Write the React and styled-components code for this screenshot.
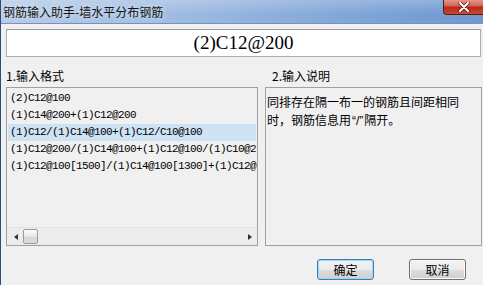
import React from 'react';
import styled, { createGlobalStyle } from 'styled-components';

const GlobalStyle = createGlobalStyle`
  html, body {
    margin: 0;
    padding: 0;
    background: #f0f0f0;
  }
  body {
    font-family: 'Noto Sans CJK SC', 'Liberation Sans', sans-serif;
    font-size: 12px;
    color: #000;
  }
`;

const cjk = `'Noto Sans CJK SC', 'Liberation Sans', sans-serif`;

const Window = styled.div`
  width: 483px;
  height: 285px;
  box-sizing: border-box;
  border-left: 1px solid #2c4d78;
  display: flex;
  flex-direction: column;
  background: #f0f0f0;
  overflow: hidden;
`;

const TitleBar = styled.div`
  height: 24px;
  flex: none;
  box-sizing: border-box;
  display: flex;
  justify-content: space-between;
  align-items: flex-start;
  border-bottom: 1px solid #7592bb;
  background:
    linear-gradient(to bottom, rgba(255, 255, 255, 0.22), rgba(255, 255, 255, 0) 60%),
    linear-gradient(to right, #b6cbe7 0%, #a0bce2 35%, #82a7d8 70%, #6d98d1 100%);
`;

const Title = styled.span`
  font-family: ${cjk};
  font-size: 12px;
  line-height: 23px;
  padding-left: 2px;
  color: #111;
  text-shadow: 0 0 6px rgba(255, 255, 255, 0.9);
`;

const CloseButton = styled.div`
  width: 40px;
  height: 16px;
  margin-top: -1px;
  box-sizing: border-box;
  border: 1px solid #5a1a14;
  border-top: none;
  border-right: none;
  border-radius: 0 0 0 4px;
  background: linear-gradient(to bottom, #e5a090 0%, #d0655a 45%, #b8281a 55%, #c84a30 100%);
  display: flex;
  align-items: center;
  justify-content: center;
`;

const Client = styled.div`
  flex: 1;
  display: flex;
  flex-direction: column;
  padding: 5px 2px 0 5px;
`;

const Entry = styled.div`
  height: 28px;
  box-sizing: border-box;
  border: 1px solid #abadb3;
  border-top-color: #9a9ca3;
  background: #fff;
  display: flex;
  align-items: center;
  justify-content: center;
  font-family: 'Liberation Serif', serif;
  font-size: 19px;
  color: #000;
`;

const Panels = styled.div`
  display: grid;
  grid-template-columns: 252px 217px;
  grid-template-rows: 30px 159px;
  column-gap: 7px;
`;

const Label = styled.div`
  display: flex;
  align-items: flex-end;
  padding-bottom: 4px;
  padding-left: ${p => p.$indent || 0}px;
  font-family: ${cjk};
  font-size: 12px;
  line-height: 14px;
`;

const Box = styled.div`
  box-sizing: border-box;
  border: 1px solid #a0a0a0;
  background: #f0f0f0;
  display: flex;
  flex-direction: column;
  overflow: hidden;
`;

const ItemList = styled.div`
  flex: 1;
  padding: 2px 1px 0;
  overflow: hidden;
`;

const Item = styled.div`
  height: 17px;
  line-height: 17px;
  padding-left: 2px;
  white-space: nowrap;
  font-family: 'Liberation Mono', monospace;
  font-size: 11px;
  letter-spacing: -0.6px;
  color: #000;
  background: ${p => (p.$selected ? '#cde2f3' : 'transparent')};
`;

const HScroll = styled.div`
  height: 17px;
  flex: none;
  border-top: 1px solid #e2e2e2;
  background: #ececec;
  display: flex;
  align-items: center;
  padding: 0 5px 0 7px;
  gap: 5px;
`;

const Arrow = styled.div`
  width: 0;
  height: 0;
  border-top: 3px solid transparent;
  border-bottom: 3px solid transparent;
  ${p => (p.$dir === 'left' ? 'border-right: 4px solid #333;' : 'border-left: 4px solid #333;')}
`;

const Thumb = styled.div`
  width: 15px;
  height: 15px;
  box-sizing: border-box;
  border: 1px solid #9a9a9a;
  border-radius: 2px;
  background: linear-gradient(to bottom, #fbfbfb 0%, #e8e8e8 50%, #d6d6d6 51%, #dcdcdc 100%);
`;

const Spacer = styled.div`
  flex: 1;
`;

const Note = styled.div`
  padding: 5px 4px 0 1px;
  font-family: ${cjk};
  font-size: 12px;
  line-height: 18px;
  color: #000;
`;

const NoteLine = styled.div`
  white-space: nowrap;
`;

const Quote = styled.span`
  margin: 0 1px;
  font-family: 'Liberation Sans', sans-serif;
  font-size: 12px;
`;

const ButtonRow = styled.div`
  display: flex;
  justify-content: flex-end;
  gap: 35px;
  margin-top: 13px;
  padding-right: 15px;
`;

const Button = styled.button`
  width: 57px;
  height: 21px;
  box-sizing: border-box;
  padding: 0;
  border-radius: 3px;
  font-family: ${cjk};
  font-size: 12px;
  color: #000;
  border: 1px solid ${p => (p.$default ? '#3c7fb1' : '#707070')};
  box-shadow: inset 0 0 0 1px ${p => (p.$default ? '#9ed6f6' : '#fcfcfc')};
  background: linear-gradient(to bottom, #f2f2f2 0%, #ebebeb 50%, #dddddd 51%, #cfcfcf 100%);
`;

// visible part of each format line (the list is scrolled to the left)
const rows = [
  '(2)C12@100',
  '(1)C14@200+(1)C12@200',
  '(1)C12/(1)C14@100+(1)C12/C10@100',
  '(1)C12@200/(1)C14@100+(1)C12@100/(1)C10@2',
  '(1)C12@100[1500]/(1)C14@100[1300]+(1)C12@',
];

export default function App() {
  return (
    <>
      <GlobalStyle />
      <Window>
        <TitleBar>
          <Title>钢筋输入助手-墙水平分布钢筋</Title>
          <CloseButton>
            <svg width="12" height="10" viewBox="0 0 12 10">
              <path d="M2 1 L10 9 M10 1 L2 9" stroke="#5b1a12" strokeWidth="3.4" strokeLinecap="round" />
              <path d="M2 1 L10 9 M10 1 L2 9" stroke="#fff" strokeWidth="2" strokeLinecap="round" />
            </svg>
          </CloseButton>
        </TitleBar>
        <Client>
          <Entry>(2)C12@200</Entry>
          <Panels>
            <Label>1.输入格式</Label>
            <Label $indent={7}>2.输入说明</Label>
            <Box>
              <ItemList>
                {rows.map((r, i) => (
                  <Item key={i} $selected={i === 2}>{r}</Item>
                ))}
              </ItemList>
              <HScroll>
                <Arrow $dir="left" />
                <Thumb />
                <Spacer />
                <Arrow $dir="right" />
              </HScroll>
            </Box>
            <Box>
              <Note>
                <NoteLine>同排存在隔一布一的钢筋且间距相同</NoteLine>
                <NoteLine>
                  时，钢筋信息用<Quote>“/”</Quote>隔开。
                </NoteLine>
              </Note>
            </Box>
          </Panels>
          <ButtonRow>
            <Button $default>确定</Button>
            <Button>取消</Button>
          </ButtonRow>
        </Client>
      </Window>
    </>
  );
}
